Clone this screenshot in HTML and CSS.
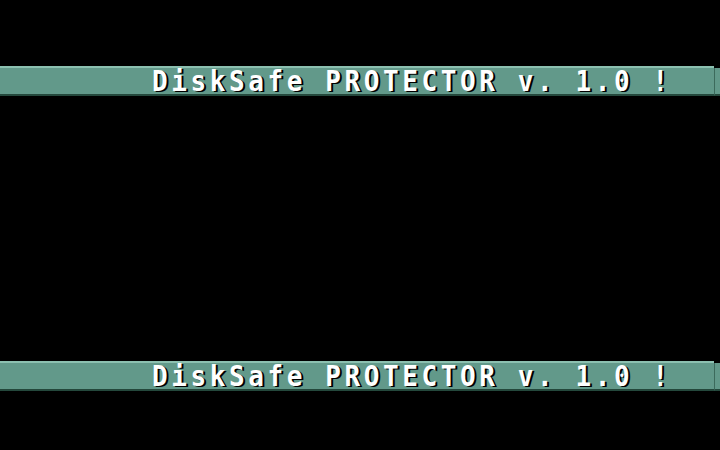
FILE: index.html
```html
<!DOCTYPE html>
<html>
<head>
<meta charset="utf-8">
<link rel="stylesheet" href="styles.css">
</head>
<body>
<div class="screen">
  <div class="bar"><div class="bar-main"><span class="title">DiskSafe PROTECTOR v. 1.0 !</span></div><div class="bar-end"></div></div>
  <div class="bar"><div class="bar-main"><span class="title">DiskSafe PROTECTOR v. 1.0 !</span></div><div class="bar-end"></div></div>
</div>
</body>
</html>
```
FILE: styles.css
```css
html, body {
  margin: 0;
  padding: 0;
  background: #000;
  width: 720px;
  height: 450px;
  overflow: hidden;
}
.screen {
  display: flex;
  flex-direction: column;
  gap: 265px;
  padding-top: 66px;
}
.bar {
  height: 30px;
  display: flex;
}
.bar-main {
  flex: 1;
  background: #62998a;
  border-top: 2px solid #8cc0b0;
  border-bottom: 2px solid #24483c;
  box-sizing: border-box;
  display: flex;
  align-items: center;
  padding-left: 152px;
}
.bar-end {
  width: 6px;
  margin-top: 2px;
  background: #62998a;
  border-left: 1px solid #3c6a5c;
  border-bottom: 2px solid #24483c;
  box-sizing: border-box;
}
.title {
  font-family: "DejaVu Sans Mono", "Liberation Mono", monospace;
  font-weight: bold;
  font-size: 26px;
  line-height: 20px;
  letter-spacing: 3.6px;
  color: #fff;
  text-shadow: 2px 1px 0 #000;
  white-space: pre;
  display: inline-block;
  transform: scaleY(1.12);
  transform-origin: left center;
}
```
